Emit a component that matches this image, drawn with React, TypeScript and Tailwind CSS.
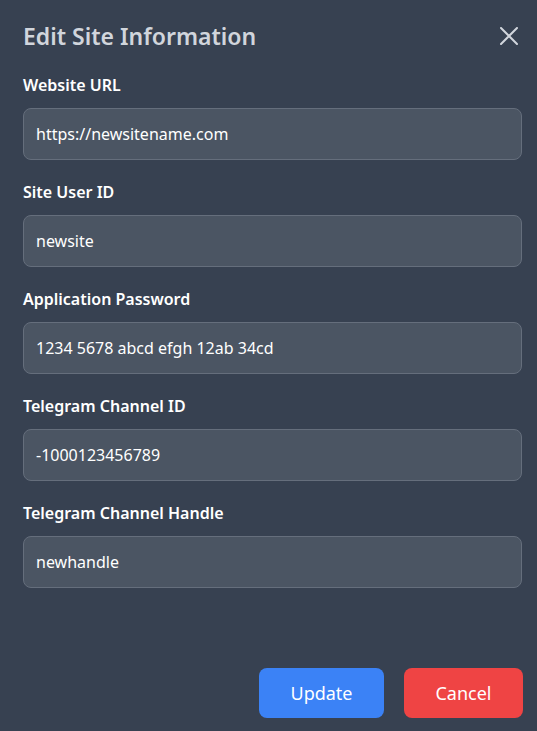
interface Field {
  id: string;
  label: string;
  value: string;
}

const FIELDS: Field[] = [
  { id: 'url', label: 'Website URL', value: 'https://newsitename.com' },
  { id: 'user', label: 'Site User ID', value: 'newsite' },
  { id: 'password', label: 'Application Password', value: '1234 5678 abcd efgh 12ab 34cd' },
  { id: 'channel', label: 'Telegram Channel ID', value: '-1000123456789' },
  { id: 'handle', label: 'Telegram Channel Handle', value: 'newhandle' },
];

const App = () => {
  return (
    <div
      className="min-h-screen bg-[#374151] pl-[23px] pr-[14px] pt-[20px]"
      style={{ fontFamily: '"Noto Sans", "Open Sans", sans-serif' }}
    >
      {/* Header */}
      <div className="flex items-center justify-between mb-[21px]">
        <h2 className="text-[23px] leading-8 font-semibold text-gray-300">Edit Site Information</h2>
        <button className="text-gray-300 mr-[5px]">
          <svg width="18" height="18" viewBox="0 0 18 18" fill="none" stroke="currentColor" strokeWidth="2" strokeLinecap="round">
            <path d="M1 1 17 17M17 1 1 17" />
          </svg>
        </button>
      </div>

      {/* Form fields */}
      <div className="flex flex-col gap-[20px] pr-px">
        {FIELDS.map((field) => (
          <div key={field.id}>
            <label htmlFor={field.id} className="block text-base leading-6 font-semibold text-white mb-[11px]">
              {field.label}
            </label>
            <input
              id={field.id}
              type="text"
              defaultValue={field.value}
              className="w-full h-[52px] px-3 rounded-lg bg-[#4b5563] border border-[#656e7c] text-white text-base outline-none"
            />
          </div>
        ))}
      </div>

      {/* Actions */}
      <div className="flex justify-end gap-5 mt-20">
        <button className="h-[50px] w-[125px] rounded-lg bg-[#3b82f6] text-white text-lg">Update</button>
        <button className="h-[50px] w-[119px] rounded-lg bg-[#ef4444] text-white text-lg">Cancel</button>
      </div>
    </div>
  );
};

export default App;
